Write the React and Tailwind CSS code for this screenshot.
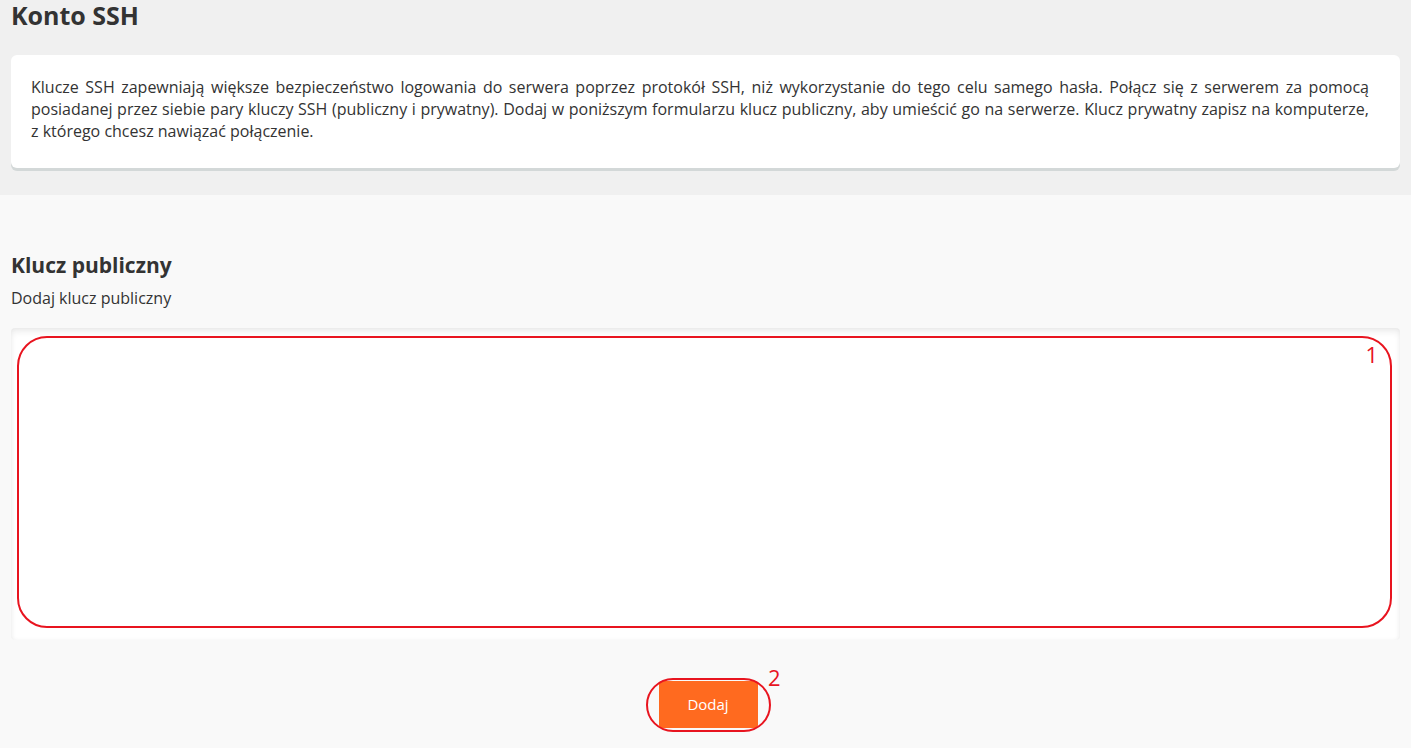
export default function App() {
  return (
    <div className="min-h-[748px] bg-[#f9f9f9] text-[#333333]" style={{ fontFamily: '"Open Sans", "Noto Sans", sans-serif' }}>
      <div className="bg-[#f0f0f0] px-[11px] pb-[27px]">
        <h1 className="text-[25px] font-bold leading-[30px] text-[#333333]">Konto SSH</h1>
        <div className="mt-[25px] rounded-[6px] bg-white pl-[20px] pr-[31px] pt-[21px] pb-[26px] shadow-[0_3px_0_#d3d8d8]">
          <p className="text-justify text-[16px] leading-[22px] text-[#333333]">
            Klucze SSH zapewniają większe bezpieczeństwo logowania do serwera poprzez protokół SSH, niż wykorzystanie do tego celu samego hasła. Połącz się z serwerem za pomocą posiadanej przez siebie pary kluczy SSH (publiczny i prywatny). Dodaj w poniższym formularzu klucz publiczny, aby umieścić go na serwerze. Klucz prywatny zapisz na komputerze, z którego chcesz nawiązać połączenie.
          </p>
        </div>
      </div>
      <div className="flex flex-col px-[11px] pt-[54px]">
        <h2 className="text-[21px] font-bold leading-[32px] text-[#333333]">Klucz publiczny</h2>
        <p className="mt-[6px] text-[16px] leading-[22px] text-[#333333]">Dodaj klucz publiczny</p>
        <div className="relative mt-[19px] h-[312px] rounded-[4px] bg-white shadow-[inset_0_4px_6px_rgba(0,0,0,0.07),inset_0_0_4px_rgba(0,0,0,0.04)]">
          <div className="absolute left-[6px] right-[8px] top-[8px] bottom-[12px] rounded-[30px] border-2 border-[#e8141f]"></div>
          <span className="absolute right-[22px] top-[13px] text-[22px] leading-[26px] text-[#e8141f]">1</span>
        </div>
        <div className="flex justify-center pt-[41px]">
          <div className="relative ml-[5px]">
            <button className="h-[47px] w-[99px] rounded-[3px] bg-[#ff6a1f] text-[15px] text-white">Dodaj</button>
            <div className="absolute -left-[13px] -right-[13px] -top-[3px] -bottom-[4px] rounded-full border-2 border-[#e8141f]"></div>
            <span className="absolute -right-[23px] -top-[17px] text-[22px] leading-[26px] text-[#e8141f]">2</span>
          </div>
        </div>
      </div>
    </div>
  );
}
